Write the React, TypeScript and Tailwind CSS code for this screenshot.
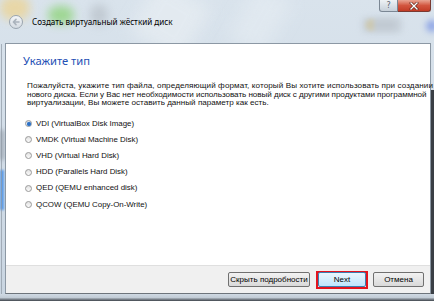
import React from "react";

const options = [
  "VDI (VirtualBox Disk Image)",
  "VMDK (Virtual Machine Disk)",
  "VHD (Virtual Hard Disk)",
  "HDD (Parallels Hard Disk)",
  "QED (QEMU enhanced disk)",
  "QCOW (QEMU Copy-On-Write)",
];

function Radio({ checked }: { checked: boolean }) {
  return (
    <span className="relative flex w-[7px] h-[7px] items-center justify-center rounded-full border border-[#9a9a9a] bg-gradient-to-b from-[#e2e2e2] to-[#fafafa]">
      {checked && <span className="w-[4px] h-[4px] rounded-full bg-[#2c6fc4] shadow-[0_0_1px_#5aa0e8]" />}
    </span>
  );
}

function Btn({ children, primary }: { children: React.ReactNode; primary?: boolean }) {
  return (
    <div
      className={
        "flex h-[15px] items-center justify-center rounded-[2px] border text-[8px] leading-none text-black " +
        (primary
          ? "w-[48px] border-[#3c7fb1] bg-gradient-to-b from-[#eaf6fd] to-[#bee6fd]"
          : "border-[#707070] bg-gradient-to-b from-[#f2f2f2] to-[#d9d9d9]")
      }
    >
      {children}
    </div>
  );
}

export default function App() {
  return (
    <div className="relative w-[434px] h-[301px] overflow-hidden bg-gradient-to-b from-[#d9e3ec] via-[#d2dde8] to-[#c9d5e1] font-['Liberation_Sans',sans-serif]">
      {/* blurred desktop behind the glass */}
      <div className="absolute left-[0px] top-[-4px] w-[30px] h-[24px] rounded-full bg-[#ecd496] blur-[5px] opacity-80" />
      <div className="absolute left-[48px] top-[6px] w-[26px] h-[18px] rounded-full bg-[#8fd47c] blur-[5px] opacity-80" />
      <div className="absolute left-[90px] top-[4px] w-[18px] h-[22px] rounded-full bg-[#b8c0c8] blur-[5px] opacity-70" />
      <div className="absolute left-[140px] top-[-10px] w-[60px] h-[60px] rotate-[30deg] bg-[#e8eef3] blur-[8px] opacity-70" />
      <div className="absolute left-[240px] top-[-10px] w-[40px] h-[60px] rotate-[30deg] bg-[#e6edf3] blur-[8px] opacity-60" />
      <div className="absolute left-[366px] top-[20px] w-[10px] h-[10px] rounded-full bg-[#e6c25a] blur-[2px]" />
      <div className="absolute left-[374px] top-[21px] w-[22px] h-[8px] rounded-[3px] bg-[#b7bec6] blur-[3px]" />
      <div className="absolute left-[362px] top-[17px] w-[40px] h-[16px] rounded-[3px] bg-[#c3ccd5] blur-[3px] opacity-70" />
      <div className="absolute left-[426px] top-[20px] w-[12px] h-[12px] rounded-full bg-[#8fa6e6] blur-[3px]" />
      <div className="absolute left-[0px] top-[170px] w-[4px] h-[40px] bg-[#5a9be8] blur-[1px]" />
      <div className="absolute left-[0px] top-[130px] w-[4px] h-[30px] bg-[#9aa4ae] blur-[2px]" />
      <div className="absolute left-[1px] top-[44px] w-[1px] h-[252px] bg-[#8e99a4] opacity-70" />
      <div className="absolute right-[0px] top-[90px] w-[3px] h-[211px] bg-[#3a3f45]" />

      <div className="relative flex h-full flex-col">
        {/* title bar */}
        <div className="flex h-[43px]">
          <div className="flex flex-1 items-center pl-[9px] pt-[1px]">
            <div className="flex w-[14px] h-[14px] items-center justify-center rounded-full border border-[#9aa5b0] bg-gradient-to-b from-[#f4f6f8] to-[#d4dbe2]">
              <svg width="10" height="10" viewBox="0 0 10 10">
                <path d="M8 5H2.6M5 2.4 2.4 5 5 7.6" fill="none" stroke="#aab3bc" strokeWidth="1.6" strokeLinecap="round" strokeLinejoin="round" />
              </svg>
            </div>
            <span className="ml-[9px] font-['Noto_Sans',sans-serif] text-[8.1px] leading-none text-black">
              Создать виртуальный жёсткий диск
            </span>
          </div>
          <div className="mr-[3px] flex h-[12px] self-start">
            <div className="flex w-[19px] items-center justify-center rounded-bl-[3px] border border-t-0 border-[#7b8794] bg-gradient-to-b from-[#eef2f5] to-[#c7d0d9] text-[8px] leading-none text-[#5b6670] font-['DejaVu_Sans',sans-serif]">
              ?
            </div>
            <div className="flex w-[33px] items-center justify-center rounded-br-[3px] border border-l-0 border-t-0 border-[#7a3a32] bg-gradient-to-b from-[#e8a493] via-[#d2553f] to-[#c23b25]">
              <svg width="10" height="8" viewBox="0 0 10 8">
                <path d="M2 1 8 7M8 1 2 7" stroke="#5a1e14" strokeWidth="2.6" strokeLinecap="square" />
                <path d="M2 1 8 7M8 1 2 7" stroke="#ffffff" strokeWidth="1.4" strokeLinecap="square" />
              </svg>
            </div>
          </div>
        </div>

        {/* body */}
        <div className="flex flex-1">
          <div className="w-[5px]" />
          <div className="flex w-[426px] flex-col border border-[#8c98a4] border-b-[#6d747b]">
            <div className="flex h-[221px] flex-col bg-white">
              <div className="pl-[17px] pt-[10px] font-['Noto_Sans',sans-serif] text-[11.2px] leading-[14px] text-[#2450b5]">
                Укажите тип
              </div>
              <div className="mt-[14px] pl-[21px] whitespace-nowrap text-[8.1px] leading-[8.5px] text-[#111]">
                <div className="tracking-[0.1px]">
                  Пожалуйста, укажите тип файла, определяющий формат, который Вы хотите использовать при создании
                </div>
                <div className="tracking-[-0.05px]">
                  нового диска. Если у Вас нет необходимости использовать новый диск с другими продуктами программной
                </div>
                <div>виртуализации, Вы можете оставить данный параметр как есть.</div>
              </div>
              <div className="mt-[8px] flex flex-col pl-[19px]">
                {options.map((o, i) => (
                  <div key={o} className="flex h-[16.2px] items-center">
                    <Radio checked={i === 0} />
                    <span className="ml-[4px] text-[7.9px] leading-none text-[#111]">{o}</span>
                  </div>
                ))}
              </div>
            </div>
            <div className="flex h-[28px] items-center justify-end gap-[5px] border-t border-[#dfdfdf] bg-[#f0f0f0] pr-[6px]">
              <div className="w-[82px]">
                <Btn>Скрыть подробности</Btn>
              </div>
              <div className="ml-[1px] flex h-[18px] w-[52px] items-center justify-center border-[2px] border-[#e3141e]">
                <Btn primary>Next</Btn>
              </div>
              <div className="w-[51px]">
                <Btn>Отмена</Btn>
              </div>
            </div>
          </div>
          <div className="w-[3px]" />
        </div>

        {/* bottom frame */}
        <div className="h-[7px] bg-gradient-to-b from-[#cfd9e3] via-[#c2ccd6] to-[#40464d]" />
      </div>
    </div>
  );
}
